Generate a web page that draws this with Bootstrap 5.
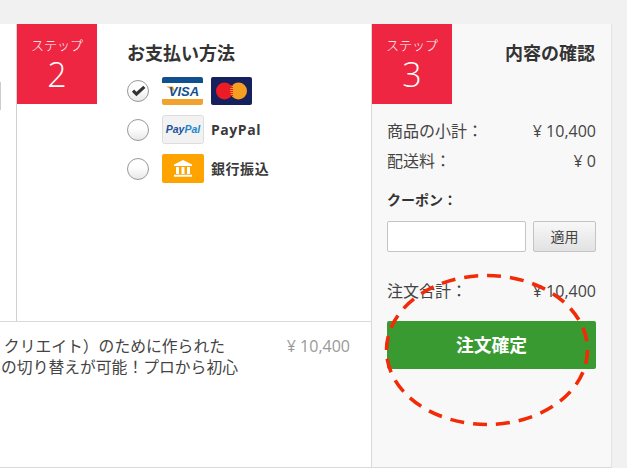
<!doctype html>
<html lang="ja"><head><meta charset="utf-8">
<link href="https://cdn.jsdelivr.net/npm/bootstrap@5.3.0/dist/css/bootstrap.min.css" rel="stylesheet">
<style>
html,body{height:468px;overflow:hidden}
body{background:#f1f1f1;font-family:"Open Sans","Noto Sans CJK JP",sans-serif;color:#333;font-size:16px;position:relative}
.shell{margin-top:24px;width:612px;height:444px;background:#fff;border-right:1px solid #e4e4e4;border-bottom:1px solid #d9d9d9}
.leftside{width:371px}
.upper{height:298px;border-bottom:1px solid #d9d9d9}
.stub{width:17px;border-right:1px solid #d2d2d2;padding-top:58px}
.stubedge{width:1px;height:28px;background:#ccc}
.stepbox{width:80px;height:80px;background:#ee2642;color:#fff;text-align:center;flex:none;padding-top:12px}
.steplabel{font-size:13px;line-height:18px;font-weight:300}
.stepnum{font-size:34px;line-height:40px;font-weight:300}
.paybody{padding:17px 0 0 30px}
.heading{font-size:18px;line-height:24px;font-weight:700;color:#333;margin-bottom:6px}
.payrow{height:39px;gap:13px}
.payrow .form-check-input{width:22px;height:22px;margin:0;border:1px solid #999;background-color:#fff;background-image:linear-gradient(#fff 40%,#e8e8e8);box-shadow:none}
.payrow .form-check-input:checked{background-color:#fff;border-color:#999;background-image:url("data:image/svg+xml,%3Csvg xmlns='http://www.w3.org/2000/svg' viewBox='0 0 22 22'%3E%3Cpath d='M5.500 10.500l3.800 3.800L18 6.500' fill='none' stroke='%23333' stroke-width='3.400'/%3E%3C/svg%3E"),linear-gradient(#fff 40%,#e8e8e8);background-size:100% 100%,100% 100%}
.payicons{gap:8px;width:90px}
.paylabel{font-size:14px;font-weight:700;color:#3a3a3a;letter-spacing:.55px;margin-left:-6px}
.lineitem{padding:14px 0 0 0;line-height:21px;color:#444}
.lineclip{width:238px;white-space:nowrap;align-items:flex-end;font-size:15.800px}
.firstline{margin-right:13px}
.lineprice{color:#999;width:112px;text-align:right}
.rightside{width:240px;background:#f8f8f8;border-left:1px solid #d9d9d9;position:relative}
.headrow{height:80px}
.confirmtitle{padding:17px 16px 0 0;font-size:18px;line-height:24px;font-weight:700;color:#333;flex:1;text-align:right}
.sumbody{padding:17px 15px 0}
.sumrow{line-height:20px;height:30px;color:#444;font-size:16px}
.couponlabel{font-size:14px;font-weight:700;margin-top:9px;line-height:20px;color:#333}
.couponrow{gap:7px;margin-top:11px;height:31px}
.couponinput{flex:1;min-width:0;height:31px;border:1px solid #c4c4c4;border-radius:2px;padding:0 6px;background:#fff}
.couponbtn{width:63px;height:31px;padding:0;font-size:14px;color:#444;border:1px solid #c4c4c4;border-radius:2px;background:linear-gradient(#f8f8f8,#e2e2e2)}
.totalrow{margin-top:29px}
.orderbtn{display:block;width:100%;height:48px;margin-top:10px;background:#3a9a32;color:#fff;border:0;border-radius:2px;font-size:17.800px;font-weight:700;padding:0}
.orderbtn:hover{background:#3a9a32;color:#fff}
.callout{position:absolute;left:0;top:0;pointer-events:none}
</style></head>
<body>
<div class="shell d-flex">
  <div class="leftside">
    <div class="upper d-flex">
      <div class="stub"><div class="stubedge"></div></div>
      <div class="stepbox"><div class="steplabel">ステップ</div><div class="stepnum">2</div></div>
      <div class="paybody">
        <div class="heading">お支払い方法</div>
        <div class="payrow d-flex align-items-center">
          <input class="form-check-input rounded-circle" type="radio" name="pay" checked aria-label="クレジットカード">
          <div class="payicons d-flex">
            <svg width="41" height="28" viewBox="0 0 41 28"><rect width="41" height="28" rx="2" fill="#fff"/><path d="M0 6V2a2 2 0 0 1 2-2h37a2 2 0 0 1 2 2v4z" fill="#11508e"/><path d="M0 22h41v4a2 2 0 0 1-2 2H2a2 2 0 0 1-2-2z" fill="#f2a22e"/><path d="M4 9.500h7l2 5z" fill="#f2a22e"/><text x="22" y="19" text-anchor="middle" font-family="Liberation Sans" font-size="13" font-weight="700" font-style="italic" fill="#11508e">VISA</text></svg>
            <svg width="41" height="28" viewBox="0 0 41 28"><rect width="41" height="28" rx="2" fill="#16205c"/><circle cx="13.500" cy="14" r="8.500" fill="#eb1c26"/><circle cx="27.500" cy="14" r="8.500" fill="#f59e1f"/><path d="M19 8.500h3M18 10.500h4M18 12.500h4M18 14.500h4M18 16.500h4M19 18.500h3" stroke="#eb1c26" stroke-width="1"/></svg>
          </div>
        </div>
        <div class="payrow d-flex align-items-center">
          <input class="form-check-input rounded-circle" type="radio" name="pay" aria-label="PayPal">
          <svg width="42" height="29" viewBox="0 0 42 29"><rect x=".5" y=".5" width="41" height="28" rx="2" fill="#f2f2f2" stroke="#ddd"/><text x="21" y="18" text-anchor="middle" font-family="Liberation Sans" font-size="10.500" font-weight="700" font-style="italic" fill="#1a4f9c">Pay<tspan fill="#1c87c9">Pal</tspan></text></svg>
          <span class="paylabel">PayPal</span>
        </div>
        <div class="payrow d-flex align-items-center">
          <input class="form-check-input rounded-circle" type="radio" name="pay" aria-label="銀行振込">
          <svg width="42" height="29" viewBox="0 0 42 29"><rect width="42" height="29" rx="2" fill="#ffa300"/><path d="M21 6l9 4.500V12H12v-1.500z" fill="#fff"/><path d="M14 13h3v7h-3zM19.500 13h3v7h-3zM25 13h3v7h-3zM12 20.800h18v2H12z" fill="#fff"/></svg>
          <span class="paylabel">銀行振込</span>
        </div>
      </div>
    </div>
    <div class="lineitem d-flex">
      <div class="lineclip d-flex flex-column"><span class="firstline">クリエイト）のために作られた</span><span>の切り替えが可能！プロから初心</span></div>
      <div class="lineprice">¥ 10,400</div>
    </div>
  </div>
  <div class="rightside">
    <div class="headrow d-flex">
      <div class="stepbox"><div class="steplabel">ステップ</div><div class="stepnum">3</div></div>
      <div class="confirmtitle">内容の確認</div>
    </div>
    <div class="sumbody">
      <div class="sumrow d-flex justify-content-between"><span>商品の小計：</span><span>¥ 10,400</span></div>
      <div class="sumrow d-flex justify-content-between"><span>配送料：</span><span>¥ 0</span></div>
      <div class="couponlabel">クーポン：</div>
      <div class="couponrow d-flex"><input class="couponinput" type="text" aria-label="クーポン"><button class="btn couponbtn" type="button">適用</button></div>
      <div class="sumrow totalrow d-flex justify-content-between"><span>注文合計：</span><span>¥ 10,400</span></div>
      <button class="btn orderbtn" type="button">注文確定</button>
    </div>
  </div>
</div>
<svg class="callout" width="627" height="468" viewBox="0 0 627 468"><ellipse cx="487" cy="350" rx="100.500" ry="74.500" fill="none" stroke="#f22a06" stroke-width="3.600" stroke-dasharray="14 9"/></svg>
</body></html>
